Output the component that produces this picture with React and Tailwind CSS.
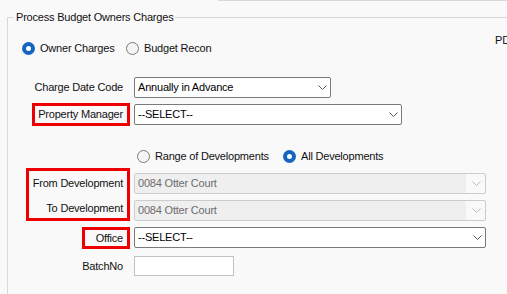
import React from "react";

function Chevron({ color = "#5a5a5a" }) {
  return (
    <svg width="9" height="5" viewBox="0 0 9 5" className="shrink-0">
      <polyline points="0.5,0.5 4.5,4.5 8.5,0.5" fill="none" stroke={color} strokeWidth="1" />
    </svg>
  );
}

function Radio({ checked, label }) {
  return (
    <div className="flex items-center h-[16px]">
      {checked ? (
        <div className="w-[13px] h-[13px] rounded-full bg-[#1565c0] flex items-center justify-center shrink-0">
          <div className="w-[5px] h-[5px] rounded-full bg-white" />
        </div>
      ) : (
        <div className="w-[13px] h-[13px] rounded-full border border-[#7b7b7b] bg-[#f5f5f5] shrink-0" />
      )}
      <span className="ml-[5px] whitespace-nowrap">{label}</span>
    </div>
  );
}

function Select({ value, width, disabled }) {
  if (disabled) {
    return (
      <div className={`${width} h-[21px] border border-[#cccccc] rounded-[2px] bg-[#f9f9f9] flex items-center`}>
        <div className="flex-1 h-full bg-[#efefef] flex items-center pl-[3px] text-[#6d6d6d] whitespace-nowrap">
          {value}
        </div>
        <div className="w-[19px] flex justify-center pl-[2px]">
          <Chevron color="#bdbdbd" />
        </div>
      </div>
    );
  }
  return (
    <div className={`${width} h-[21px] border border-[#7a7a7a] rounded-[2px] bg-white flex items-center pl-[3px] pr-[3px]`}>
      <span className="flex-1 whitespace-nowrap text-black">{value}</span>
      <Chevron />
    </div>
  );
}

function Label({ text, boxed, boxWidth, height = "h-[21px]" }) {
  return (
    <div className="w-[122px] flex justify-end shrink-0">
      <div
        className={`${boxWidth || ""} ${height} border-[3px] ${boxed ? "border-[#ee0000]" : "border-transparent"} flex items-center justify-end pr-[4px] whitespace-nowrap`}
      >
        {text}
      </div>
    </div>
  );
}

export default function App() {
  return (
    <div className="w-[507px] h-[294px] overflow-hidden bg-[#f9f9f9] flex flex-col text-[11px] tracking-[-0.2px] text-[#111] font-['Liberation_Sans',Arial,sans-serif]">
      <div className="h-px ml-[218px] bg-[#d9d9d9] shrink-0" />
      <div className="relative mt-[16px] ml-[7px] flex-1 border-l border-t border-[#d9d9d9]">
        <div className="absolute left-[6px] -top-[9px] px-[2px] bg-[#f9f9f9] leading-[16px] whitespace-nowrap">
          Process Budget Owners Charges
        </div>

        {/* radio row 1 */}
        <div className="mt-[22px] h-[16px] flex items-center pl-[14px]">
          <div className="w-[104px]">
            <Radio checked label="Owner Charges" />
          </div>
          <Radio label="Budget Recon" />
          <span className="ml-auto mb-[15px] -mr-[8px] w-[20px] overflow-hidden whitespace-nowrap">PDF</span>
        </div>

        {/* Charge Date Code */}
        <div className="mt-[21px] flex items-center gap-[4px]">
          <Label text="Charge Date Code" />
          <Select value="Annually in Advance" width="w-[197px]" />
        </div>

        {/* Property Manager */}
        <div className="mt-[5px] flex items-center gap-[4px]">
          <Label text="Property Manager" boxed boxWidth="w-[98px]" height="h-[23px]" />
          <Select value="--SELECT--" width="w-[268px]" />
        </div>

        {/* radio row 2 */}
        <div className="mt-[22px] h-[16px] flex items-center pl-[129px]">
          <div className="w-[146px]">
            <Radio label="Range of Developments" />
          </div>
          <Radio checked label="All Developments" />
        </div>

        {/* From / To */}
        <div className="mt-[4px] flex items-start">
          <div className="w-[122px] flex justify-end shrink-0">
            <div className="w-[104px] h-[53px] border-[3px] border-[#ee0000] flex flex-col gap-[6px] pt-[2px] pr-[4px]">
              <div className="h-[21px] flex items-center justify-end whitespace-nowrap">From Development</div>
              <div className="h-[21px] flex items-center justify-end whitespace-nowrap">To Development</div>
            </div>
          </div>
          <div className="ml-[4px] pt-[5px] flex flex-col gap-[6px]">
            <Select value="0084 Otter Court" width="w-[352px]" disabled />
            <Select value="0084 Otter Court" width="w-[352px]" disabled />
          </div>
        </div>

        {/* Office */}
        <div className="mt-[6px] flex items-start gap-[4px]">
          <Label text="Office" boxed boxWidth="w-[48px]" height="h-[22px]" />
          <Select value="--SELECT--" width="w-[352px]" />
        </div>

        {/* BatchNo */}
        <div className="mt-[7px] flex items-center gap-[4px]">
          <Label text="BatchNo" height="h-[20px]" />
          <div className="w-[100px] h-[20px] border border-[#c2c2c2] bg-white" />
        </div>
      </div>
    </div>
  );
}
